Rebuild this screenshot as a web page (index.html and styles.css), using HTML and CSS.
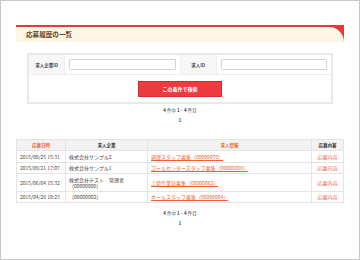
FILE: index.html
```html
<!DOCTYPE html>
<html lang="ja">
<head>
<meta charset="utf-8">
<link rel="stylesheet" href="styles.css">
</head>
<body>
<div class="frame">
  <div class="page">
    <div class="heading"><h1>応募履歴の一覧</h1></div>
    <div class="search">
      <div class="search-row">
        <div class="label">求人企業ID</div>
        <div class="field"><input type="text"></div>
        <div class="label">求人ID</div>
        <div class="field"><input type="text"></div>
      </div>
      <div class="search-actions"><button type="button">この条件で検索</button></div>
    </div>
    <p class="count"><b>4</b> 件中 <b>1</b> − <b>4</b> 件目</p>
    <p class="pages">1</p>
    <table class="list">
      <colgroup><col class="c1"><col class="c2"><col class="c3"><col class="c4"></colgroup>
      <thead>
        <tr><th class="sort">応募日時</th><th>求人企業</th><th class="sort">求人情報</th><th>応募内容</th></tr>
      </thead>
      <tbody>
        <tr><td class="date">2015/08/25 15:31</td><td>株式会社サンプル2</td><td><a>調理スタッフ募集（00000070）</a></td><td class="act"><a>応募内容</a></td></tr>
        <tr><td class="date">2015/08/21 17:07</td><td>株式会社サンプル1</td><td><a>コールセンタースタッフ募集（00000068）</a></td><td class="act"><a>応募内容</a></td></tr>
        <tr class="tall"><td class="date">2015/06/04 15:32</td><td>株式会社テスト　管理者<br>（00000006）</td><td><a>工場作業員募集（00000062）</a></td><td class="act"><a>応募内容</a></td></tr>
        <tr><td class="date">2015/04/28 10:23</td><td>（00000002）</td><td><a>ホールスタッフ募集（00000064）</a></td><td class="act"><a>応募内容</a></td></tr>
      </tbody>
    </table>
    <p class="count"><b>4</b> 件中 <b>1</b> − <b>4</b> 件目</p>
    <p class="pages">1</p>
  </div>
</div>
</body>
</html>
```
FILE: styles.css
```css
* { box-sizing: border-box; }
html, body { margin: 0; padding: 0; background: #fff; }
body { font-family: "Noto Sans CJK JP", "Noto Sans", sans-serif; color: #333; }
.frame {
  width: 360px;
  height: 260px;
  border: 1px solid #c8c8c8;
  padding: 24px 15px 0;
}
.page { width: 328px; }
.heading {
  background: #e8383d;
  padding-top: 2px;
}
.heading h1 {
  margin: 0;
  height: 15px;
  line-height: 15px;
  padding-left: 10px;
  background: #fdf6e4;
  border-top-right-radius: 16px;
  font-size: 6.6px;
  font-weight: bold;
  color: #6b4526;
}
.search {
  margin: 11px 11px 0;
  border: 2px solid #e9e9e9;
}
.search-row {
  display: flex;
  height: 20px;
  border-bottom: 1px solid #eeeeee;
}
.label {
  width: 36px;
  background: #f7f7f7;
  border-right: 1px solid #eeeeee;
  display: flex;
  align-items: center;
  justify-content: center;
  font-size: 4.5px;
  font-weight: bold;
  color: #444;
}
.field {
  flex: 1;
  display: flex;
  align-items: center;
  padding: 0 4px;
  border-right: 1px solid #eeeeee;
}
.field:last-child { border-right: 0; }
.field input {
  width: 100%;
  height: 11px;
  border: 1px solid #d4d4d4;
  border-radius: 1px;
  padding: 0;
  margin: 0;
  background: #fff;
}
.search-actions {
  height: 27px;
  display: flex;
  align-items: center;
  justify-content: center;
}
.search-actions button {
  width: 84px;
  height: 16px;
  margin: 0;
  padding: 0;
  border: 1px solid #d62a2f;
  background: #ee3b3f;
  color: #fff;
  font-family: inherit;
  font-size: 5px;
  font-weight: bold;
}
.count {
  margin: 2px 0 0;
  text-align: center;
  font-size: 4.5px;
  line-height: 8px;
  color: #444;
}
.count b { font-weight: bold; }
.pages {
  margin: 2px 0 0;
  text-align: center;
  font-size: 5px;
  font-weight: bold;
  line-height: 8px;
  color: #445577;
}
.list {
  margin-top: 15px;
  width: 327px;
  border-collapse: collapse;
  table-layout: fixed;
  font-size: 5px;
}
.list col.c1 { width: 49px; }
.list col.c2 { width: 82px; }
.list col.c3 { width: 164px; }
.list col.c4 { width: 32px; }
.list th, .list td {
  border: 1px solid #e4e4e4;
  padding: 0 3px;
  height: 11px;
  line-height: 6px;
  vertical-align: middle;
  white-space: nowrap;
}
.list th {
  background: #f2f2f2;
  font-weight: bold;
  color: #333;
  text-align: center;
  font-size: 4.5px;
}
.list th.sort { color: #f0642a; }
.list tbody tr:first-child td { height: 12px; }
.list tr.tall td { height: 18px; }
.list td { color: #444; }
.list td a { color: #ef5f2a; text-decoration: underline; }
.list td.act { text-align: center; }
.list td.act a { text-decoration: none; }
.list + .count { margin-top: 6px; }
```
